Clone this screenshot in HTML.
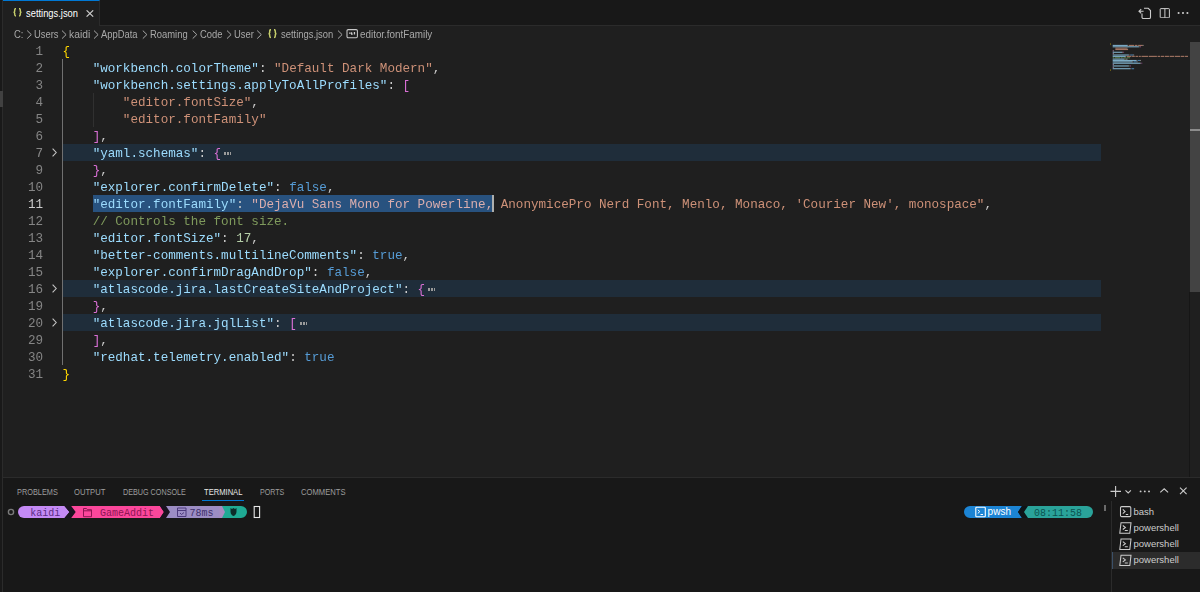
<!DOCTYPE html>
<html><head><meta charset="utf-8">
<style>
*{margin:0;padding:0;box-sizing:border-box}
html,body{width:1200px;height:592px;overflow:hidden;background:#1f1f1f}
body{position:relative;font-family:"Liberation Sans",sans-serif;color:#cccccc}
.a{position:absolute}
.ui{font-size:9.4px;white-space:pre;line-height:12px}
#tabs{left:0;top:0;width:1200px;height:26px;background:#181818;border-bottom:1px solid #2b2b2b}
#tab{left:3px;top:0;width:97px;height:26px;background:#1f1f1f;border-top:1px solid #0078d4;border-right:1px solid #2b2b2b}
.bc{color:#a9a9a9;top:29.1px;font-size:10px;transform:scaleX(0.94);transform-origin:0 0}
/* code */
#code{left:62.4px;top:44px;font-family:"Liberation Mono",monospace;font-size:12.6px;line-height:17px;color:#cccccc}
#code div{height:17px;white-space:pre}
#nums{left:0;top:44px;width:43px;font-family:"Liberation Mono",monospace;font-size:12.6px;line-height:17px;text-align:right;color:#858585}
#nums div{height:17px}
.k{color:#9cdcfe}.s{color:#ce9178}.b{color:#569cd6}.n{color:#b5cea8}.c{color:#7f9a5c}
.y{color:#ffd700}.p{color:#da70d6}.dots{display:inline-block;width:7.5px;height:2.4px;margin-left:2.8px;vertical-align:2.2px;background:repeating-linear-gradient(90deg,#9a9a9a 0 1.9px,transparent 1.9px 2.8px)}
.fold{left:63px;width:1038px;height:17px;background:#1f2d3a}
.chev{left:52px;width:5px;height:9px}
/* panel */
.pt{top:485.9px;font-size:9.6px;color:#9d9d9d;white-space:pre;line-height:12px;transform-origin:0 0}
.term{font-family:"Liberation Mono",monospace;font-size:10px;line-height:12px;white-space:pre;margin-top:2.4px}
.tl{left:1133.5px;font-size:9.5px;margin-top:0.7px;color:#cccccc;white-space:pre;line-height:12px}
</style></head><body><div id="wrap" style="position:absolute;left:0;top:0;width:1200px;height:592px;filter:blur(0.3px)">
<!-- ===== tab bar ===== -->
<div class="a" id="tabs"></div>
<div class="a" id="tab"></div>
<div class="a" style="left:0;top:0;width:2px;height:592px;background:#191919"></div>
<div class="a" style="left:2px;top:0;width:1px;height:592px;background:#2b2b2b"></div>
<div class="a" style="left:0;top:90.5px;width:3px;height:16.5px;background:#414141"></div>
<svg class="a" style="left:13.2px;top:8.4px" width="9" height="8.5" viewBox="0 0 9 8.5"><g fill="none" stroke="#c4cc6a" stroke-width="1.45"><path d="M3 0.6C2 0.6 1.7 1 1.7 2V3.2C1.7 3.8 1.3 4.25 0.5 4.25C1.3 4.25 1.7 4.7 1.7 5.3V6.5C1.7 7.5 2 7.9 3 7.9"/><path d="M6 0.6C7 0.6 7.3 1 7.3 2V3.2C7.3 3.8 7.7 4.25 8.5 4.25C7.7 4.25 7.3 4.7 7.3 5.3V6.5C7.3 7.5 7 7.9 6 7.9"/></g></svg>
<div class="a ui" style="left:26.4px;top:8.2px;color:#ffffff;font-size:10px;transform:scaleX(0.935);transform-origin:0 0">settings.json</div>
<svg class="a" style="left:86px;top:10px" width="8" height="7" viewBox="0 0 8 7"><path d="M0.6 0.3L7.2 6.7M7.2 0.3L0.6 6.7" stroke="#cccccc" stroke-width="1.1"/></svg>
<!-- right tab actions -->
<svg class="a" style="left:1138px;top:7px" width="15" height="13" viewBox="0 0 15 13"><path d="M6 1.3h4.2l2.3 2.3v6.6a1.3 1.3 0 0 1-1.3 1.3h-5.9a1.3 1.3 0 0 1-1.3-1.3V6.5" fill="none" stroke="#cccccc" stroke-width="1.1"/><path d="M3.2 2.2L1 4.25l2.2 2.05M1 4.25h4.6" fill="none" stroke="#cccccc" stroke-width="1.1"/></svg>
<svg class="a" style="left:1158.5px;top:6.8px" width="12" height="11" viewBox="0 0 12 11"><rect x="1.2" y="1.6" width="9.2" height="9.2" rx="0.6" fill="none" stroke="#cccccc" stroke-width="1"/><path d="M5.9 1.6v9.2" stroke="#cccccc" stroke-width="1"/></svg>
<svg class="a" style="left:1177px;top:11px" width="12" height="4" viewBox="0 0 12 4"><circle cx="1.6" cy="2" r="1.05" fill="#cccccc"/><circle cx="6" cy="2" r="1.05" fill="#cccccc"/><circle cx="10.4" cy="2" r="1.05" fill="#cccccc"/></svg>

<!-- ===== breadcrumbs ===== -->
<div class="a ui bc" style="left:14.2px">C:</div>
<div class="a ui bc" style="left:34.4px">Users</div>
<div class="a ui bc" style="left:69.4px;transform:scaleX(1.03)">kaidi</div>
<div class="a ui bc" style="left:101.3px">AppData</div>
<div class="a ui bc" style="left:150.3px">Roaming</div>
<div class="a ui bc" style="left:199.5px">Code</div>
<div class="a ui bc" style="left:233.7px">User</div>
<svg class="a" style="left:267.8px;top:29.4px" width="9" height="9.2" viewBox="0 0 9 8.5" preserveAspectRatio="none"><g fill="none" stroke="#c4cc6a" stroke-width="1.45"><path d="M3 0.6C2 0.6 1.7 1 1.7 2V3.2C1.7 3.8 1.3 4.25 0.5 4.25C1.3 4.25 1.7 4.7 1.7 5.3V6.5C1.7 7.5 2 7.9 3 7.9"/><path d="M6 0.6C7 0.6 7.3 1 7.3 2V3.2C7.3 3.8 7.7 4.25 8.5 4.25C7.7 4.25 7.3 4.7 7.3 5.3V6.5C7.3 7.5 7 7.9 6 7.9"/></g></svg>
<div class="a ui bc" style="left:280.8px">settings.json</div>
<svg class="a" style="left:345.5px;top:29px" width="12" height="9.5" viewBox="0 0 12 9.5"><rect x="1" y="0.6" width="10.4" height="8.2" rx="1.2" fill="none" stroke="#c8c8c8" stroke-width="1.05"/><path d="M3.1 4.2h1.6M5.6 3.2v2h1.1M7.8 3.6h1.3M7.8 4.9h1.3" fill="none" stroke="#d0d0d0" stroke-width="1.2"/></svg>
<div class="a ui bc" style="left:359.5px;transform:scaleX(0.985)">editor.fontFamily</div>
<svg class="a" style="left:0;top:29.6px" width="350" height="10" viewBox="0 0 350 10">
<g fill="none" stroke="#a9a9a9" stroke-width="1">
<path d="M27.2 0.6l4.1 4-4.1 4"/><path d="M62.0 0.6l4.1 4-4.1 4"/><path d="M94.0 0.6l4.1 4-4.1 4"/><path d="M142.8 0.6l4.1 4-4.1 4"/><path d="M192.7 0.6l4.1 4-4.1 4"/><path d="M227.0 0.6l4.1 4-4.1 4"/><path d="M257.2 0.6l4.1 4-4.1 4"/><path d="M338.0 0.6l4.1 4-4.1 4"/>
</g></svg>

<!-- ===== minimap & scrollbar ===== -->
<div class="a" style="left:1190px;top:42px;width:10px;height:250px;background:#434343"></div>
<div class="a" style="left:1189px;top:292px;width:1px;height:185px;background:#161616"></div>
<div class="a" style="left:1190px;top:129px;width:10px;height:1.5px;background:#8c8c8c"></div>
<svg class="a" style="left:1108px;top:42px" width="82" height="32" viewBox="0 0 82 32" id="mm"><g opacity="0.75"><rect x="2.00" y="1.50" width="0.67" height="1.1" fill="#ffd700"/><rect x="4.68" y="2.87" width="14.74" height="1.1" fill="#9cdcfe"/><rect x="19.42" y="2.87" width="0.67" height="1.1" fill="#cccccc"/><rect x="20.76" y="2.87" width="5.36" height="1.1" fill="#ce9178"/><rect x="26.79" y="2.87" width="2.68" height="1.1" fill="#ce9178"/><rect x="30.14" y="2.87" width="4.69" height="1.1" fill="#ce9178"/><rect x="34.83" y="2.87" width="0.67" height="1.1" fill="#cccccc"/><rect x="4.68" y="4.24" width="26.13" height="1.1" fill="#9cdcfe"/><rect x="30.81" y="4.24" width="0.67" height="1.1" fill="#cccccc"/><rect x="32.15" y="4.24" width="0.67" height="1.1" fill="#da70d6"/><rect x="7.36" y="5.61" width="11.39" height="1.1" fill="#ce9178"/><rect x="18.75" y="5.61" width="0.67" height="1.1" fill="#cccccc"/><rect x="7.36" y="6.98" width="12.73" height="1.1" fill="#ce9178"/><rect x="4.68" y="8.35" width="0.67" height="1.1" fill="#da70d6"/><rect x="5.35" y="8.35" width="0.67" height="1.1" fill="#cccccc"/><rect x="4.68" y="9.72" width="9.38" height="1.1" fill="#9cdcfe"/><rect x="14.06" y="9.72" width="0.67" height="1.1" fill="#cccccc"/><rect x="15.40" y="9.72" width="0.67" height="1.1" fill="#da70d6"/><rect x="4.68" y="11.09" width="0.67" height="1.1" fill="#da70d6"/><rect x="5.35" y="11.09" width="0.67" height="1.1" fill="#cccccc"/><rect x="4.68" y="12.46" width="16.08" height="1.1" fill="#9cdcfe"/><rect x="20.76" y="12.46" width="0.67" height="1.1" fill="#cccccc"/><rect x="22.10" y="12.46" width="3.35" height="1.1" fill="#569cd6"/><rect x="25.45" y="12.46" width="0.67" height="1.1" fill="#cccccc"/><rect x="4.68" y="13.83" width="12.73" height="1.1" fill="#9cdcfe"/><rect x="17.41" y="13.83" width="0.67" height="1.1" fill="#cccccc"/><rect x="18.75" y="13.83" width="4.69" height="1.1" fill="#ce9178"/><rect x="24.11" y="13.83" width="2.68" height="1.1" fill="#ce9178"/><rect x="27.46" y="13.83" width="2.68" height="1.1" fill="#ce9178"/><rect x="30.81" y="13.83" width="2.01" height="1.1" fill="#ce9178"/><rect x="33.49" y="13.83" width="6.70" height="1.1" fill="#ce9178"/><rect x="40.86" y="13.83" width="8.04" height="1.1" fill="#ce9178"/><rect x="49.57" y="13.83" width="2.68" height="1.1" fill="#ce9178"/><rect x="52.92" y="13.83" width="3.35" height="1.1" fill="#ce9178"/><rect x="56.94" y="13.83" width="4.02" height="1.1" fill="#ce9178"/><rect x="61.63" y="13.83" width="4.69" height="1.1" fill="#ce9178"/><rect x="66.99" y="13.83" width="5.36" height="1.1" fill="#ce9178"/><rect x="73.02" y="13.83" width="3.35" height="1.1" fill="#ce9178"/><rect x="77.04" y="13.83" width="2.96" height="1.1" fill="#ce9178"/><rect x="4.68" y="15.20" width="1.34" height="1.1" fill="#6a9955"/><rect x="6.69" y="15.20" width="5.36" height="1.1" fill="#6a9955"/><rect x="12.72" y="15.20" width="2.01" height="1.1" fill="#6a9955"/><rect x="15.40" y="15.20" width="2.68" height="1.1" fill="#6a9955"/><rect x="18.75" y="15.20" width="3.35" height="1.1" fill="#6a9955"/><rect x="4.68" y="16.57" width="11.39" height="1.1" fill="#9cdcfe"/><rect x="16.07" y="16.57" width="0.67" height="1.1" fill="#cccccc"/><rect x="17.41" y="16.57" width="1.34" height="1.1" fill="#b5cea8"/><rect x="18.75" y="16.57" width="0.67" height="1.1" fill="#cccccc"/><rect x="4.68" y="17.94" width="23.45" height="1.1" fill="#9cdcfe"/><rect x="28.13" y="17.94" width="0.67" height="1.1" fill="#cccccc"/><rect x="29.47" y="17.94" width="2.68" height="1.1" fill="#569cd6"/><rect x="32.15" y="17.94" width="0.67" height="1.1" fill="#cccccc"/><rect x="4.68" y="19.31" width="19.43" height="1.1" fill="#9cdcfe"/><rect x="24.11" y="19.31" width="0.67" height="1.1" fill="#cccccc"/><rect x="25.45" y="19.31" width="3.35" height="1.1" fill="#569cd6"/><rect x="28.80" y="19.31" width="0.67" height="1.1" fill="#cccccc"/><rect x="4.68" y="20.68" width="27.47" height="1.1" fill="#9cdcfe"/><rect x="32.15" y="20.68" width="0.67" height="1.1" fill="#cccccc"/><rect x="33.49" y="20.68" width="0.67" height="1.1" fill="#da70d6"/><rect x="4.68" y="22.05" width="0.67" height="1.1" fill="#da70d6"/><rect x="5.35" y="22.05" width="0.67" height="1.1" fill="#cccccc"/><rect x="4.68" y="23.42" width="16.08" height="1.1" fill="#9cdcfe"/><rect x="20.76" y="23.42" width="0.67" height="1.1" fill="#cccccc"/><rect x="22.10" y="23.42" width="0.67" height="1.1" fill="#da70d6"/><rect x="4.68" y="24.79" width="0.67" height="1.1" fill="#da70d6"/><rect x="5.35" y="24.79" width="0.67" height="1.1" fill="#cccccc"/><rect x="4.68" y="26.16" width="17.42" height="1.1" fill="#9cdcfe"/><rect x="22.10" y="26.16" width="0.67" height="1.1" fill="#cccccc"/><rect x="23.44" y="26.16" width="2.68" height="1.1" fill="#569cd6"/><rect x="2.00" y="27.53" width="0.67" height="1.1" fill="#ffd700"/></g></svg>

<!-- ===== line numbers ===== -->
<div class="a" id="nums">
<div>1</div><div>2</div><div>3</div><div>4</div><div>5</div><div>6</div><div>7</div><div>9</div><div>10</div><div style="color:#cccccc">11</div><div>12</div><div>13</div><div>14</div><div>15</div><div>16</div><div>19</div><div>20</div><div>29</div><div>30</div><div>31</div>
</div>
<!-- fold chevrons -->
<svg class="a chev" style="top:148px" viewBox="0 0 5 9"><path d="M0.6 0.6l3.6 3.9-3.6 3.9" fill="none" stroke="#c5c5c5" stroke-width="1.1"/></svg>
<svg class="a chev" style="top:284px" viewBox="0 0 5 9"><path d="M0.6 0.6l3.6 3.9-3.6 3.9" fill="none" stroke="#c5c5c5" stroke-width="1.1"/></svg>
<svg class="a chev" style="top:318px" viewBox="0 0 5 9"><path d="M0.6 0.6l3.6 3.9-3.6 3.9" fill="none" stroke="#c5c5c5" stroke-width="1.1"/></svg>

<!-- fold backgrounds -->
<div class="a fold" style="top:144px"></div>
<div class="a fold" style="top:280px"></div>
<div class="a fold" style="top:314px"></div>
<!-- indent guides -->
<div class="a" style="left:62px;top:59px;width:1px;height:306px;background:#707070"></div>
<div class="a" style="left:92.6px;top:93px;width:1px;height:34px;background:#303030"></div>

<!-- selection -->
<div class="a" style="left:92.5px;top:195px;width:400px;height:17px;background:#28527f"></div>
<div class="a" style="left:492px;top:195px;width:2px;height:17px;background:#aeafad"></div>

<!-- code -->
<div class="a" id="code">
<div><span class="y">{</span></div>
<div>    <span class="k">"workbench.colorTheme"</span>: <span class="s">"Default Dark Modern"</span>,</div>
<div>    <span class="k">"workbench.settings.applyToAllProfiles"</span>: <span class="p">[</span></div>
<div>        <span class="s">"editor.fontSize"</span>,</div>
<div>        <span class="s">"editor.fontFamily"</span></div>
<div>    <span class="p">]</span>,</div>
<div>    <span class="k">"yaml.schemas"</span>: <span class="p">{</span><span class="dots"></span></div>
<div>    <span class="p">}</span>,</div>
<div>    <span class="k">"explorer.confirmDelete"</span>: <span class="b">false</span>,</div>
<div>    <span class="k">"editor.fontFamily"</span>: <span class="s" style="color:#dbaeae">"DejaVu Sans Mono for Powerline,</span><span class="s"> AnonymicePro Nerd Font, Menlo, Monaco, 'Courier New', monospace"</span>,</div>
<div>    <span class="c">// Controls the font size.</span></div>
<div>    <span class="k">"editor.fontSize"</span>: <span class="n">17</span>,</div>
<div>    <span class="k">"better-comments.multilineComments"</span>: <span class="b">true</span>,</div>
<div>    <span class="k">"explorer.confirmDragAndDrop"</span>: <span class="b">false</span>,</div>
<div>    <span class="k">"atlascode.jira.lastCreateSiteAndProject"</span>: <span class="p">{</span><span class="dots"></span></div>
<div>    <span class="p">}</span>,</div>
<div>    <span class="k">"atlascode.jira.jqlList"</span>: <span class="p">[</span><span class="dots"></span></div>
<div>    <span class="p">]</span>,</div>
<div>    <span class="k">"redhat.telemetry.enabled"</span>: <span class="b">true</span></div>
<div><span class="y">}</span></div>
</div>

<!-- ===== panel ===== -->
<div class="a" style="left:3px;top:477px;width:1197px;height:115px;background:#181818;border-top:1px solid #2b2b2b"></div>
<div class="a pt" style="left:16.8px;transform:scaleX(0.766)">PROBLEMS</div>
<div class="a pt" style="left:74.4px;transform:scaleX(0.793)">OUTPUT</div>
<div class="a pt" style="left:123.1px;transform:scaleX(0.751)">DEBUG CONSOLE</div>
<div class="a pt" style="left:204.2px;transform:scaleX(0.792);color:#e7e7e7">TERMINAL</div>
<div class="a pt" style="left:260.1px;transform:scaleX(0.741)">PORTS</div>
<div class="a pt" style="left:301.1px;transform:scaleX(0.797)">COMMENTS</div>
<div class="a" style="left:202px;top:500px;width:42px;height:1px;background:#0078d4"></div>

<!-- panel actions -->
<svg class="a" style="left:1100px;top:484px" width="100" height="14" viewBox="0 0 100 14">
<g fill="none" stroke="#cccccc" stroke-width="1.1">
<path d="M15.6 2v11M10.5 7.4h10.5"/>
<path d="M25.5 6.3l2.7 2.6 2.7-2.6"/>
<path d="M60.3 8.3l3.9-3.5 3.9 3.5"/>
<path d="M80 3.6l6.6 6.6M86.6 3.6l-6.6 6.6"/>
</g>
<g fill="#cccccc"><circle cx="40.6" cy="7.4" r="0.95"/><circle cx="44.8" cy="7.4" r="0.95"/><circle cx="49" cy="7.4" r="0.95"/></g>
</svg>

<!-- terminal list -->
<div class="a" style="left:1110.5px;top:501px;width:1px;height:91px;background:#2b2b2b"></div>
<div class="a" style="left:1111.5px;top:552px;width:88.5px;height:16.5px;background:#2c2c2c;border-left:1px solid #3b5068"></div>
<svg class="a" style="left:1118px;top:504px" width="15" height="62" viewBox="0 0 15 62">
<g fill="none" stroke="#cccccc" stroke-width="1.05">
<rect x="2.5" y="2.6" width="10.3" height="10" rx="1.2"/><path d="M4.8 5.4l2.3 2.1-2.3 2.1M7.8 10.5h2.4"/>
<path d="M3 18.8h10l-1.2 10.4h-10z"/><path d="M4.8 21.5l2.6 2-2.6 2M6.8 26.5h3"/>
<path d="M3 35h10l-1.2 10.4h-10z"/><path d="M4.8 37.7l2.6 2-2.6 2M6.8 42.7h3"/>
<path d="M3 51.2h10l-1.2 10.4h-10z"/><path d="M4.8 53.9l2.6 2-2.6 2M6.8 58.9h3"/>
</g></svg>
<div class="a tl" style="top:505px">bash</div>
<div class="a tl" style="top:521.5px">powershell</div>
<div class="a tl" style="top:537.5px">powershell</div>
<div class="a tl" style="top:553.8px">powershell</div>
<div class="a" style="left:1104px;top:505px;width:2px;height:6px;background:#6b6b6b"></div>

<!-- terminal prompt -->
<svg class="a" style="left:0;top:500px" width="270" height="24" viewBox="0 0 270 24">
<circle cx="11" cy="12" r="2.6" fill="none" stroke="#7a7a7a" stroke-width="1.4"/>
<!-- kaidi segment -->
<path d="M24 6h40.5l5 6-5 6h-40.5a6 6 0 0 1 0-12z" fill="#c48af5"/>
<path d="M64.5 6h6.7l4.5 6-4.5 6h-6.7l5-6z" fill="#1a1320"/>
<path d="M71.2 6h88.8l4 6-4 6h-88.8l4.5-6z" fill="#fb479b"/>
<path d="M160 6h6l4 6-4 6h-6l4-6z" fill="#1a1320"/>
<path d="M166 6h55v12h-55l4-6z" fill="#9c8dc4"/>
<!-- teal -->
<path d="M221 6h20a6 6 0 0 1 0 12h-20l3-6z" fill="#1faa94"/>
<path d="M219.5 6h2.5l3 6-3 6h-2.5z" fill="#a78cc0"/>
<!-- folder icon -->
<path d="M83.5 8.5h3l1 1.2h4v7h-8z M83.5 10.8h8" fill="none" stroke="#8d1553" stroke-width="1"/>
<!-- stopwatch icon -->
<path d="M177.5 8h8.5v8.5h-8.5z M177.5 10.5h8.5 M180 13l1.5 1.5 2.5-2" fill="none" stroke="#4d3a7c" stroke-width="1"/>
<!-- pwsh/shell icon in teal -->
<path d="M232 9l1.5-1 1.5 1 1.5-1v3.5c0 2.5-1.5 4-3 4.5-1.5-.5-3-2-3-4.5V8z" fill="#0d2d2a"/>
<!-- cursor -->
<rect x="254.2" y="6.5" width="5.4" height="11" fill="none" stroke="#e8e8e8" stroke-width="1.1"/>
</svg>
<div class="a term" style="left:30.2px;top:505.8px;color:#5a2a82">kaidi</div>
<div class="a term" style="left:100.1px;top:505.8px;color:#8d1553">GameAddit</div>
<div class="a term" style="left:189.4px;top:505.8px;color:#3e2f6b">78ms</div>

<!-- right prompt -->
<svg class="a" style="left:960px;top:500px" width="140" height="24" viewBox="0 0 140 24">
<path d="M10 6h52l-4 6 4 6h-52a6 6 0 0 1 0-12z" fill="#1c84d4"/>
<path d="M62 6h6l-4 6 4 6h-6l-4-6z" fill="#0e1418"/>
<path d="M68 6h59a6 6 0 0 1 0 12h-59l-4-6z" fill="#2aa39a"/>
<rect x="15.8" y="7.3" width="9.5" height="9.5" rx="0.8" fill="none" stroke="#ffffff" stroke-width="1.1"/>
<path d="M17.8 9.8l2 1.8-2 1.8M20.5 14.5h2.5" fill="none" stroke="#ffffff" stroke-width="1"/>
</svg>
<div class="a" style="left:987.6px;top:505.5px;font-size:10px;line-height:12px;color:#ffffff;white-space:pre">pwsh</div>
<div class="a term" style="left:1034px;top:505.8px;color:#0a5450">08:11:58</div>

</div></body></html>
